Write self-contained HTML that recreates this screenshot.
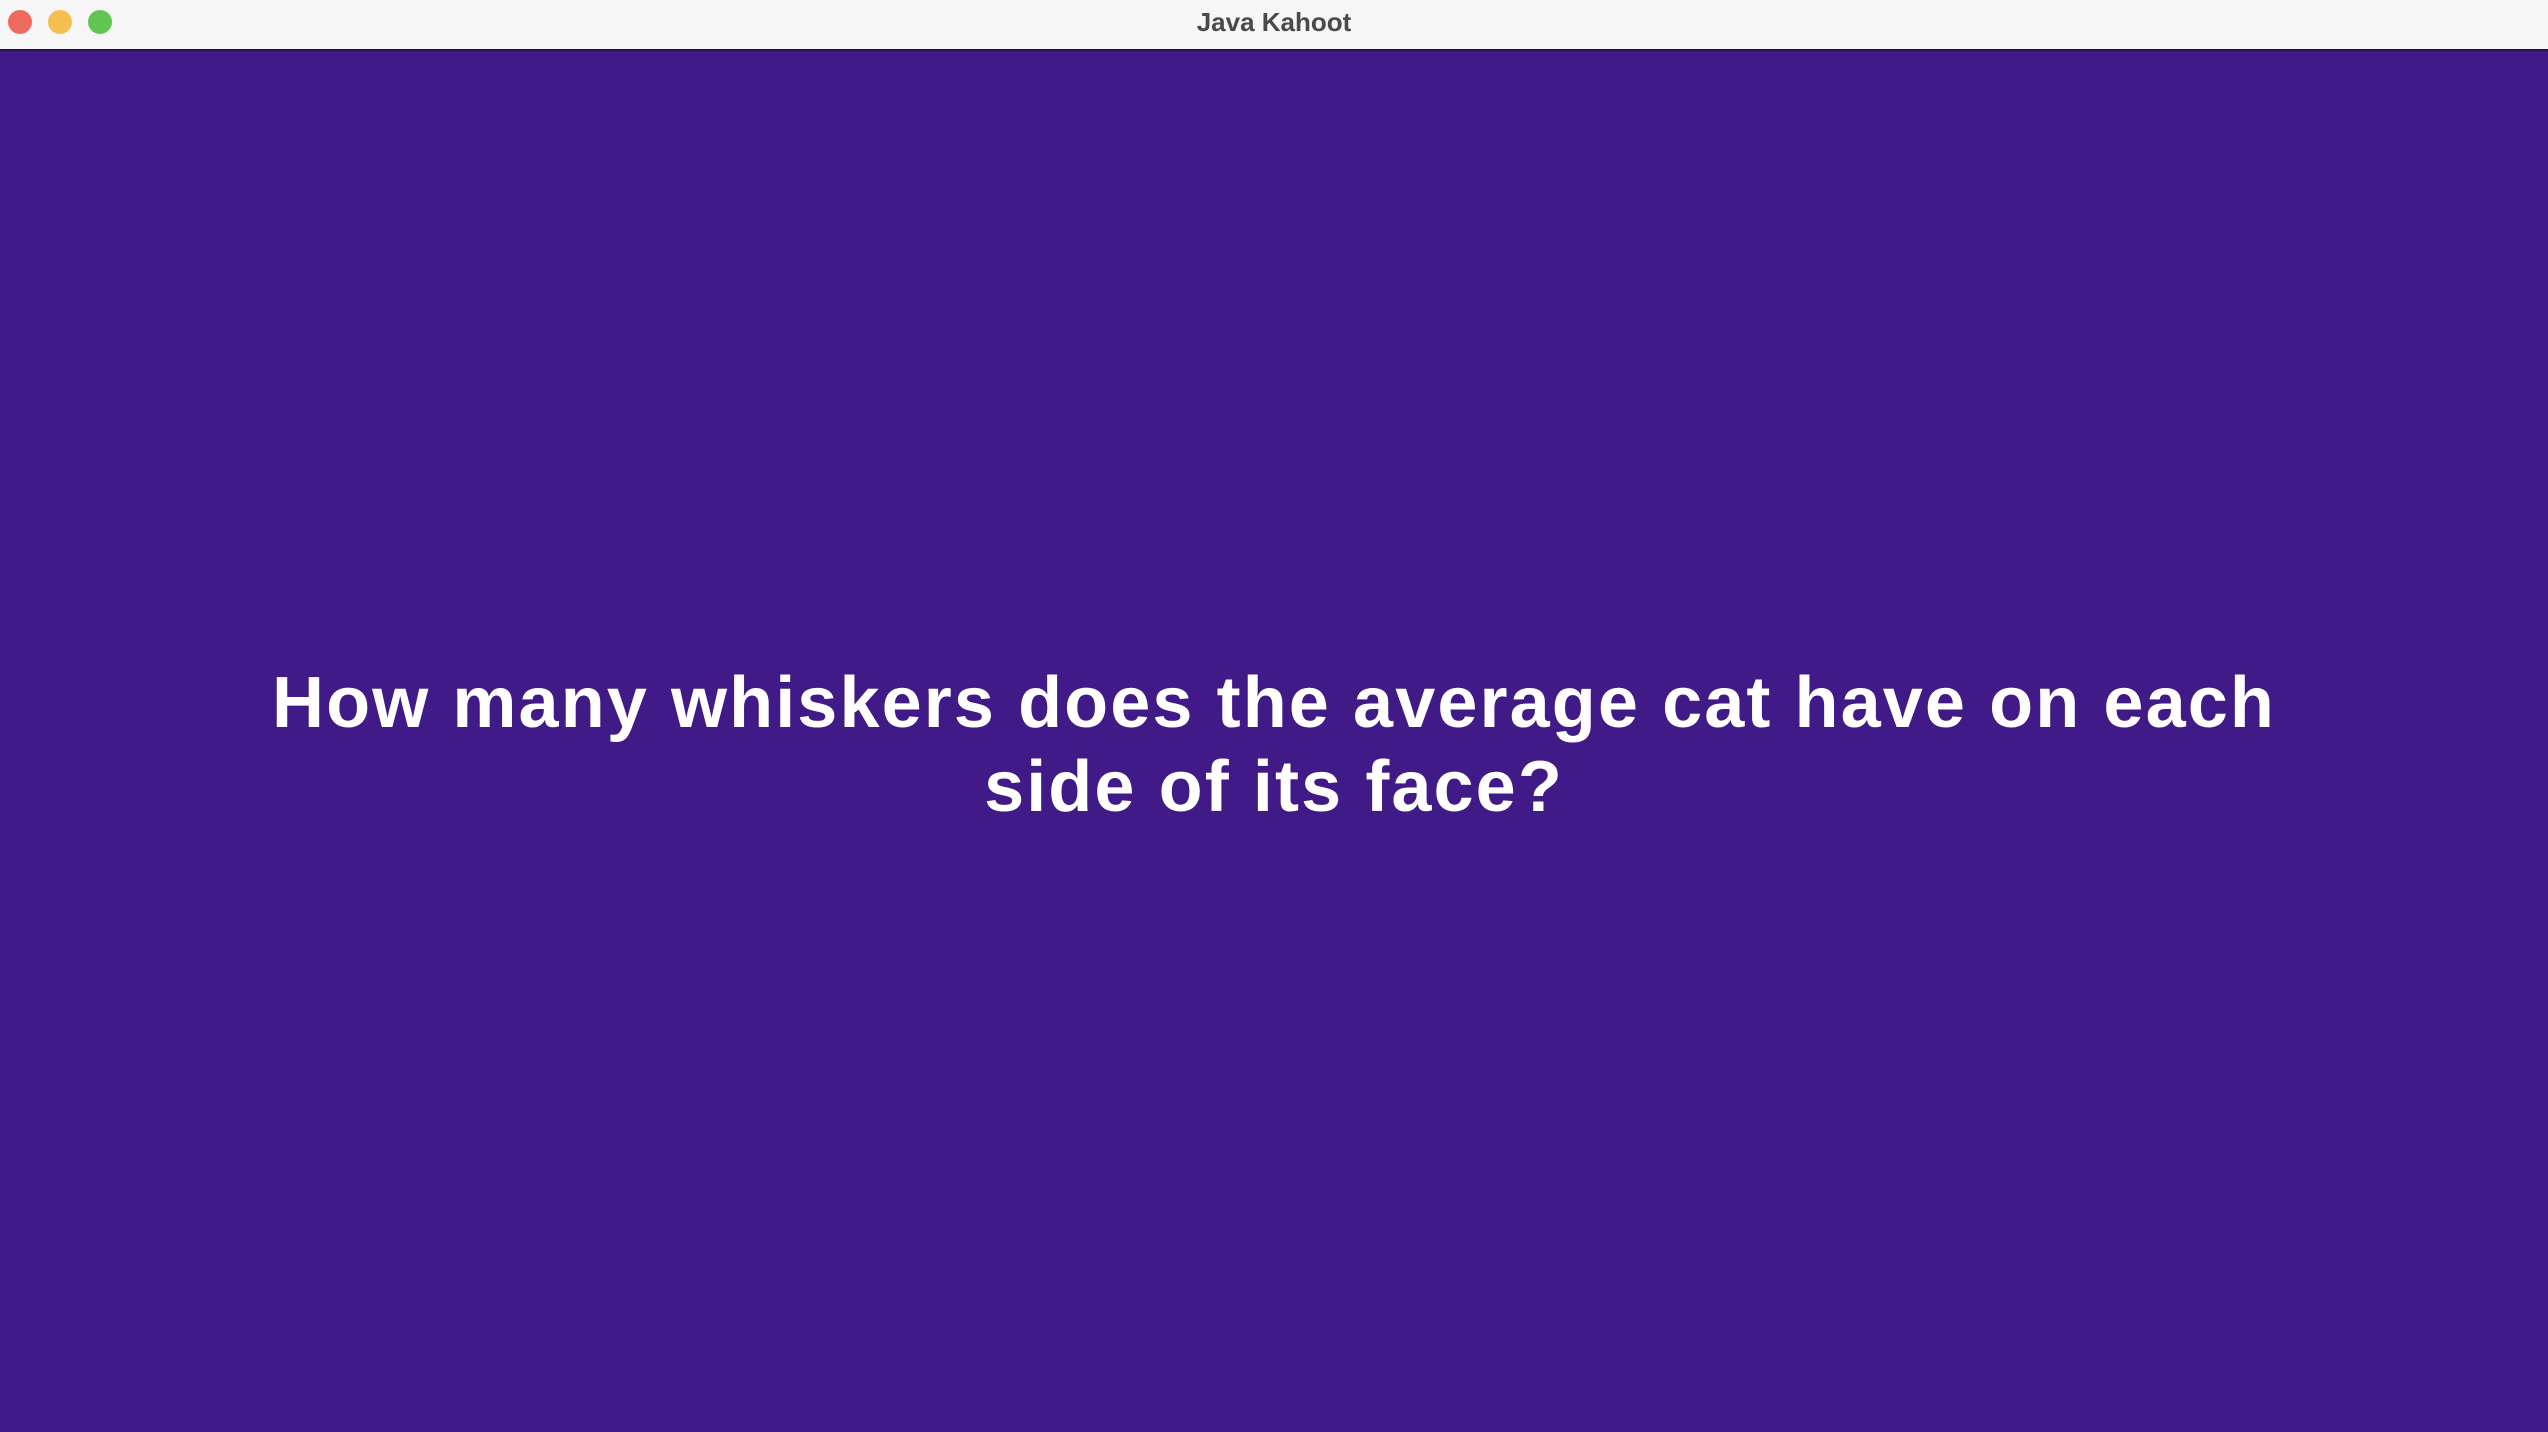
<!DOCTYPE html>
<html><head><style>
html,body{margin:0;padding:0;width:2548px;height:1432px;overflow:hidden;background:#401a87;font-family:"Liberation Sans",sans-serif}
.bar{position:absolute;left:0;top:0;width:2548px;height:49px;background:#f6f6f6;border-bottom:2px solid #2a0e5e}
.dot{position:absolute;top:10px;width:24px;height:24px;border-radius:50%}
.title{position:absolute;top:0;left:0;width:2548px;text-align:center;line-height:44px;font-size:26px;font-weight:bold;color:#4a4a4a}
.line{position:absolute;left:0;width:2548px;text-align:center;color:#fff;font-weight:bold;font-size:72px;line-height:84px;letter-spacing:2.1px;white-space:nowrap}
</style></head><body>
<div class="bar">
<div class="dot" style="left:8px;background:#ee6a5f;border:0"></div>
<div class="dot" style="left:48px;background:#f5bf4f"></div>
<div class="dot" style="left:88px;background:#61c554"></div>
<div class="title">Java Kahoot</div>
</div>
<div class="line" style="top:661px">How many whiskers does the average cat have on each</div>
<div class="line" style="top:745px">side of its face?</div>
</body></html>
